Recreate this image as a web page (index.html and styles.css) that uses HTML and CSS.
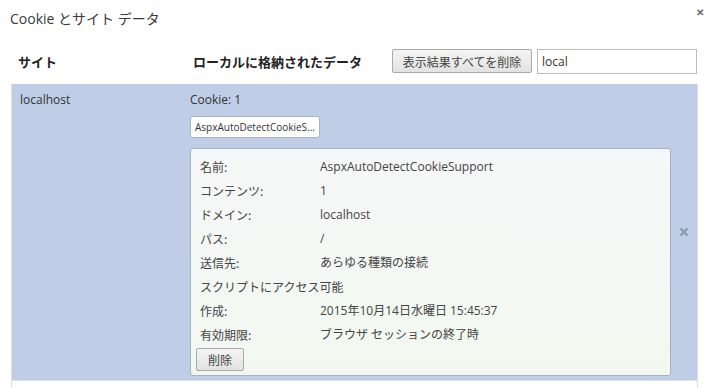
FILE: index.html
```html
<!DOCTYPE html>
<html lang="ja">
<head>
    <meta charset="UTF-8">
    <title>Cookie とサイト データ</title>
    <link rel="stylesheet" href="styles.css">
</head>
<body>
    <div class="dialog">
        <div class="title-bar">
            <h1>Cookie とサイト データ</h1>
            <span class="close">&#x2715;</span>
        </div>

        <div class="list-header">
            <div class="col-site">サイト</div>
            <div class="col-data">ローカルに格納されたデータ</div>
            <div class="tools">
                <button class="btn">表示結果すべてを削除</button>
                <input class="search" type="text" value="local">
            </div>
        </div>

        <div class="list">
            <div class="site-row">
                <div class="site-name">localhost</div>
                <div class="site-data">
                    <div class="count">Cookie: 1</div>
                    <div class="chip">AspxAutoDetectCookieS...</div>
                    <div class="details">
                        <div class="detail"><span class="label">名前:</span><span class="value">AspxAutoDetectCookieSupport</span></div>
                        <div class="detail"><span class="label">コンテンツ:</span><span class="value">1</span></div>
                        <div class="detail"><span class="label">ドメイン:</span><span class="value">localhost</span></div>
                        <div class="detail"><span class="label">パス:</span><span class="value">/</span></div>
                        <div class="detail"><span class="label">送信先:</span><span class="value">あらゆる種類の接続</span></div>
                        <div class="detail"><span class="label wide">スクリプトにアクセス可能</span></div>
                        <div class="detail"><span class="label">作成:</span><span class="value">2015年10月14日水曜日 15:45:37</span></div>
                        <div class="detail"><span class="label">有効期限:</span><span class="value">ブラウザ セッションの終了時</span></div>
                        <button class="btn small">削除</button>
                    </div>
                </div>
                <div class="row-remove">
                    <svg width="10" height="10" viewBox="0 0 10 10"><path d="M1.5 1.5 L8.5 8.5 M8.5 1.5 L1.5 8.5" stroke="#8495ad" stroke-width="2"/></svg>
                </div>
            </div>
        </div>
    </div>
</body>
</html>
```

FILE: styles.css
```css
body {
    margin: 0;
    background-color: #fff;
    font-family: "Open Sans", "Noto Sans CJK JP", sans-serif;
    font-size: 12px;
    color: #333;
    overflow: hidden;
}
.dialog {
    width: 714px;
    height: 388px;
}
.title-bar {
    display: flex;
    justify-content: space-between;
    height: 38px;
    padding: 0 10px;
}
.title-bar h1 {
    margin: 0;
    font-size: 14px;
    font-weight: normal;
    line-height: 38px;
    color: #3a3a3a;
}
.close {
    font-size: 10px;
    font-weight: bold;
    color: #666;
    margin: 5px 0 0 0;
}
.list-header {
    display: flex;
    align-items: center;
    height: 46px;
    margin: 0 17px 0 18px;
    font-weight: bold;
    font-size: 13px;
    color: #222;
}
.col-site {
    width: 175px;
}
.tools {
    margin-left: auto;
    display: flex;
    align-items: center;
    gap: 5px;
}
.btn {
    font-family: "Noto Sans CJK JP", sans-serif;
    font-size: 12px;
    color: #444;
    height: 24px;
    padding: 0 10px;
    border: 1px solid #aaa;
    border-radius: 2px;
    background: linear-gradient(#f4f4f4, #e2e2e2);
    white-space: nowrap;
}
.tools .btn {
    width: 140px;
    padding: 0;
}
.search {
    width: 160px;
    height: 25px;
    box-sizing: border-box;
    padding: 0 4px;
    border: 1px solid #bbb;
    font-family: "Open Sans", sans-serif;
    font-size: 12px;
    color: #333;
}
.list {
    margin: 0 16px 0 11px;
    height: 304px;
    border-left: 1px solid #e0e0e0;
    border-right: 1px solid #e0e0e0;
}
.site-row {
    display: grid;
    grid-template-columns: 178px 481px 26px;
    background-color: #bfcee6;
    padding: 8px 0 4px;
    border-bottom: 1px solid #d8e0ec;
}
.site-name {
    padding-left: 8px;
    line-height: 16px;
}
.count {
    line-height: 16px;
}
.chip {
    display: inline-block;
    margin: 8px 0 10px;
    padding: 0 4px;
    height: 20px;
    line-height: 20px;
    font-size: 10px;
    background-color: #fff;
    border: 1px solid #aab4c4;
    border-radius: 3px;
}
.details {
    padding: 5px 0 4px 9px;
    background: linear-gradient(#f6f7f8, #f2f8f0);
    border: 1px solid #a9b3bf;
    border-radius: 3px;
    box-sizing: border-box;
    height: 228px;
}
.detail {
    display: flex;
    height: 24px;
    align-items: center;
    font-family: "Noto Sans CJK JP", sans-serif;
    color: #444;
}
.label {
    width: 120px;
    flex-shrink: 0;
}
.label.wide {
    width: auto;
}
.value {
    font-family: "Open Sans", "Noto Sans CJK JP", sans-serif;
}
.btn.small {
    height: 23px;
    width: 48px;
    padding: 0;
    margin: 2px 0 0 -4px;
}
.row-remove {
    display: flex;
    align-items: center;
    justify-content: center;
    margin-bottom: 4px;
}
```
